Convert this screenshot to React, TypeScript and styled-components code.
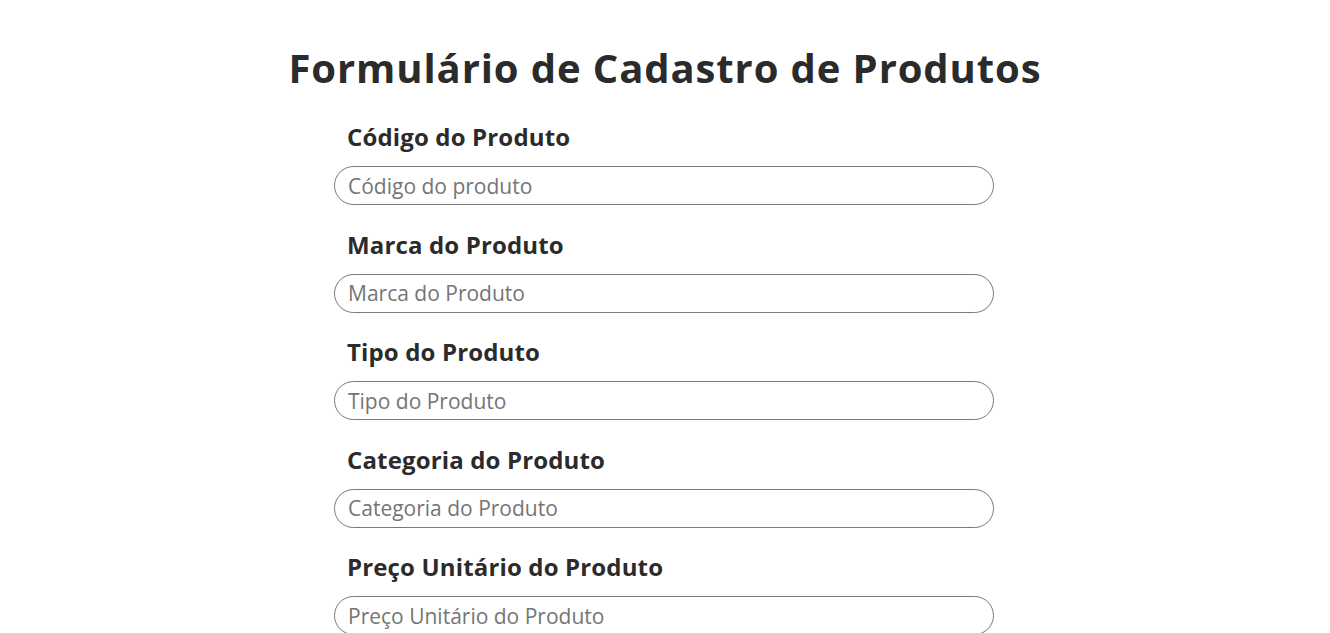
import React from "react";
import styled, { createGlobalStyle } from "styled-components";

const GlobalStyle = createGlobalStyle`
  body {
    margin: 0;
    background: #ffffff;
    font-family: "Open Sans", "Liberation Sans", sans-serif;
    color: #2b2b2b;
  }
`;

const fields = [
  { id: "codigo", label: "Código do Produto", placeholder: "Código do produto" },
  { id: "marca", label: "Marca do Produto", placeholder: "Marca do Produto" },
  { id: "tipo", label: "Tipo do Produto", placeholder: "Tipo do Produto" },
  { id: "categoria", label: "Categoria do Produto", placeholder: "Categoria do Produto" },
  { id: "preco", label: "Preço Unitário do Produto", placeholder: "Preço Unitário do Produto" },
  { id: "quantidade", label: "Quantidade em Estoque", placeholder: "Quantidade em Estoque" },
];

export default function App() {
  return (
    <Page>
      <GlobalStyle />
      <Title>Formulário de Cadastro de Produtos</Title>
      <Form onSubmit={(e) => e.preventDefault()}>
        {fields.map((f) => (
          <Field key={f.id}>
            <Label htmlFor={f.id}>{f.label}</Label>
            <Input id={f.id} type="text" placeholder={f.placeholder} />
          </Field>
        ))}
      </Form>
    </Page>
  );
}

const Page = styled.main`
  display: flex;
  flex-direction: column;
  align-items: center;
  padding-top: 43px;
`;

const Title = styled.h1`
  margin: 0;
  font-size: 40px;
  line-height: 50px;
  font-weight: 700;
  letter-spacing: 0.9px;
  color: #2b2b2b;
`;

const Form = styled.form`
  width: 660px;
  margin: 29px 2px 0 0;
  display: flex;
  flex-direction: column;
  gap: 24.5px;
`;

const Field = styled.div`
  display: flex;
  flex-direction: column;
  gap: 14px;
`;

const Label = styled.label`
  padding-left: 13px;
  font-size: 24px;
  line-height: 30px;
  font-weight: 700;
  letter-spacing: 0.15px;
  color: #2b2b2b;
`;

const Input = styled.input`
  box-sizing: border-box;
  height: 39px;
  width: 100%;
  padding: 0 13px;
  border: 1px solid #7a7a7a;
  border-radius: 20px;
  font-family: inherit;
  font-size: 21px;
  color: #2b2b2b;
  outline: none;

  &::placeholder {
    color: #757575;
  }
`;
